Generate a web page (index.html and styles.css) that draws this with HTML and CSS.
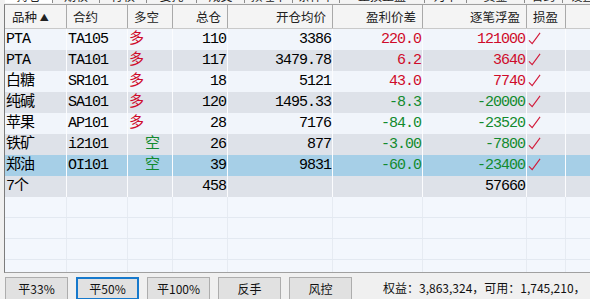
FILE: index.html
```html
<!DOCTYPE html>
<html lang="zh-CN">

<head>
    <meta charset="UTF-8">
    <title>持仓</title>
    <link rel="stylesheet" href="styles.css">
</head>

<body>
    <!-- 顶部页签 (被截掉一半) -->
    <div class="tabs">
        <div class="tab on" style="width:48px">持仓</div>
        <div class="tab" style="width:47px">期权</div>
        <div class="tab" style="width:47px">行权</div>
        <div class="tab" style="width:50px">委托</div>
        <div class="tab" style="width:48px">成交</div>
        <div class="tab" style="width:48px">预埋单</div>
        <div class="tab" style="width:47px">条件单</div>
        <div class="tab" style="width:85px">止损止盈</div>
        <div class="tab" style="width:42px">为单</div>
        <div class="tab" style="width:58px">资金</div>
        <div class="tab" style="width:38px">合约</div>
        <div class="tab" style="width:40px">设置</div>
    </div>

    <!-- 持仓表格 -->
    <div class="grid">
        <div class="row head">
            <div class="cell l">品种 <span class="sort">▲</span></div>
            <div class="cell l">合约</div>
            <div class="cell l">多空</div>
            <div class="cell r">总仓</div>
            <div class="cell r">开仓均价</div>
            <div class="cell r">盈利价差</div>
            <div class="cell r">逐笔浮盈</div>
            <div class="cell l">损盈</div>
            <div class="cell"></div>
        </div>

        <div class="row odd">
            <div class="cell">PTA</div>
            <div class="cell">TA105</div>
            <div class="cell up">多</div>
            <div class="cell r">110</div>
            <div class="cell r">3386</div>
            <div class="cell r up">220.0</div>
            <div class="cell r up">121000</div>
            <div class="cell"><svg class="tick" viewBox="0 0 14 14"><path d="M1 9 L4.5 12.5 L13 1"/></svg></div>
            <div class="cell"></div>
        </div>
        <div class="row even">
            <div class="cell">PTA</div>
            <div class="cell">TA101</div>
            <div class="cell up">多</div>
            <div class="cell r">117</div>
            <div class="cell r">3479.78</div>
            <div class="cell r up">6.2</div>
            <div class="cell r up">3640</div>
            <div class="cell"><svg class="tick" viewBox="0 0 14 14"><path d="M1 9 L4.5 12.5 L13 1"/></svg></div>
            <div class="cell"></div>
        </div>
        <div class="row odd">
            <div class="cell">白糖</div>
            <div class="cell">SR101</div>
            <div class="cell up">多</div>
            <div class="cell r">18</div>
            <div class="cell r">5121</div>
            <div class="cell r up">43.0</div>
            <div class="cell r up">7740</div>
            <div class="cell"><svg class="tick" viewBox="0 0 14 14"><path d="M1 9 L4.5 12.5 L13 1"/></svg></div>
            <div class="cell"></div>
        </div>
        <div class="row even">
            <div class="cell">纯碱</div>
            <div class="cell">SA101</div>
            <div class="cell up">多</div>
            <div class="cell r">120</div>
            <div class="cell r">1495.33</div>
            <div class="cell r down">-8.3</div>
            <div class="cell r down">-20000</div>
            <div class="cell"><svg class="tick" viewBox="0 0 14 14"><path d="M1 9 L4.5 12.5 L13 1"/></svg></div>
            <div class="cell"></div>
        </div>
        <div class="row odd">
            <div class="cell">苹果</div>
            <div class="cell">AP101</div>
            <div class="cell up">多</div>
            <div class="cell r">28</div>
            <div class="cell r">7176</div>
            <div class="cell r down">-84.0</div>
            <div class="cell r down">-23520</div>
            <div class="cell"><svg class="tick" viewBox="0 0 14 14"><path d="M1 9 L4.5 12.5 L13 1"/></svg></div>
            <div class="cell"></div>
        </div>
        <div class="row even">
            <div class="cell">铁矿</div>
            <div class="cell">i2101</div>
            <div class="cell down short">空</div>
            <div class="cell r">26</div>
            <div class="cell r">877</div>
            <div class="cell r down">-3.00</div>
            <div class="cell r down">-7800</div>
            <div class="cell"><svg class="tick" viewBox="0 0 14 14"><path d="M1 9 L4.5 12.5 L13 1"/></svg></div>
            <div class="cell"></div>
        </div>
        <div class="row sel">
            <div class="cell">郑油</div>
            <div class="cell">OI101</div>
            <div class="cell down short">空</div>
            <div class="cell r">39</div>
            <div class="cell r">9831</div>
            <div class="cell r down">-60.0</div>
            <div class="cell r down">-23400</div>
            <div class="cell"><svg class="tick" viewBox="0 0 14 14"><path d="M1 9 L4.5 12.5 L13 1"/></svg></div>
            <div class="cell"></div>
        </div>
        <div class="row even">
            <div class="cell">7个</div>
            <div class="cell"></div>
            <div class="cell"></div>
            <div class="cell r">458</div>
            <div class="cell"></div>
            <div class="cell"></div>
            <div class="cell r">57660</div>
            <div class="cell"></div>
            <div class="cell"></div>
        </div>

        <!-- 空行 -->
        <div class="row blank">
            <div class="cell"></div><div class="cell"></div><div class="cell"></div>
            <div class="cell"></div><div class="cell"></div><div class="cell"></div>
            <div class="cell"></div><div class="cell"></div><div class="cell"></div>
        </div>
        <div class="row blank">
            <div class="cell"></div><div class="cell"></div><div class="cell"></div>
            <div class="cell"></div><div class="cell"></div><div class="cell"></div>
            <div class="cell"></div><div class="cell"></div><div class="cell"></div>
        </div>
        <div class="row blank">
            <div class="cell"></div><div class="cell"></div><div class="cell"></div>
            <div class="cell"></div><div class="cell"></div><div class="cell"></div>
            <div class="cell"></div><div class="cell"></div><div class="cell"></div>
        </div>
        <div class="row blank">
            <div class="cell"></div><div class="cell"></div><div class="cell"></div>
            <div class="cell"></div><div class="cell"></div><div class="cell"></div>
            <div class="cell"></div><div class="cell"></div><div class="cell"></div>
        </div>
    </div>

    <!-- 底部按钮 -->
    <div class="bar">
        <div class="btn">平33%</div>
        <div class="btn on">平50%</div>
        <div class="btn">平100%</div>
        <div class="btn">反手</div>
        <div class="btn">风控</div>
        <div class="status">权益：3,863,324，可用：1,745,210，</div>
    </div>
</body>

</html>
```

FILE: styles.css
```css
body {
    margin: 0;
    width: 590px;
    height: 299px;
    overflow: hidden;
    background-color: #f0f0f0;
    font-family: "Noto Sans CJK SC", sans-serif;
    color: #000;
}

/* 页签 */
.tabs {
    display: flex;
    height: 4px;
    overflow: hidden;
    padding-left: 5px;
    background-color: #f0f0f0;
}

.tab {
    flex: none;
    box-sizing: border-box;
    height: 14px;
    margin-top: -11px;
    border-right: 1px solid #8c8c8c;
    font-size: 12px;
    line-height: 14px;
    text-align: center;
    color: #222;
    background-color: #f4f4f4;
}

.tab.on {
    background-color: #fff;
}

/* 表格 */
.grid {
    width: 640px;
    height: 267px;
    margin-left: 4px;
    overflow: hidden;
    border-left: 1px solid #7c7c7c;
    border-top: 1px solid #a0a0a0;
    border-bottom: 1px solid #a0a0a0;
    background-color: #f3f7fd;
}

.row {
    display: grid;
    grid-template-columns: 62px 61px 45px 55px 105px 90px 104px 39px 80px;
    height: 21px;
    font-family: "Liberation Mono", "Noto Sans CJK SC", monospace;
    font-size: 15px;
    letter-spacing: -1px;
}

.cell {
    box-sizing: border-box;
    padding: 0 1px;
    border-right: 1px solid #fbfcfe;
    line-height: 21px;
    white-space: nowrap;
    overflow: hidden;
}

.cell.r {
    text-align: right;
    padding-right: 1px;
}

.row.head {
    box-sizing: border-box;
    height: 24px;
    background-color: #f4f4f4;
    border-bottom: 1px solid #c9c9c9;
    font-family: "Noto Sans CJK SC", sans-serif;
    font-size: 12.5px;
    letter-spacing: 0;
    color: #222;
}

.head .cell {
    line-height: 23px;
    border-right-color: #a9a9a9;
}

.head .cell.l {
    padding-left: 6px;
}

.head .cell:first-child {
    padding-left: 7px;
}

.head .cell.r {
    padding-right: 6px;
}

.sort {
    font-size: 9px;
    vertical-align: 1px;
}

.row.odd {
    background-color: #f1f5fb;
}

.row.even {
    background-color: #dee2e9;
}

.row.sel {
    background-color: #a6cfe7;
}

.row.blank {
    box-sizing: border-box;
    border-bottom: 1px solid #e3e9f1;
}

.blank .cell {
    border-right-color: #e6ebf2;
}

.up {
    color: #cf0a2a;
}

.down {
    color: #128a2e;
}

.short {
    padding-left: 17px;
}

.tick {
    display: block;
    width: 13px;
    height: 13px;
    margin-top: 3px;
    fill: none;
    stroke: #d21a3a;
    stroke-width: 1.2;
}

/* 底部 */
.bar {
    display: flex;
    gap: 8px;
    padding: 4px 0 0 5px;
}

.btn {
    flex: none;
    box-sizing: border-box;
    width: 63px;
    height: 23px;
    border: 1px solid #adadad;
    background-color: #e1e1e1;
    font-size: 12px;
    line-height: 21px;
    text-align: center;
    color: #111;
}

.btn.on {
    border: 2px solid #1679cc;
    line-height: 19px;
}

.status {
    margin-left: 23px;
    font-size: 12px;
    line-height: 21px;
    white-space: nowrap;
    color: #111;
}
```
